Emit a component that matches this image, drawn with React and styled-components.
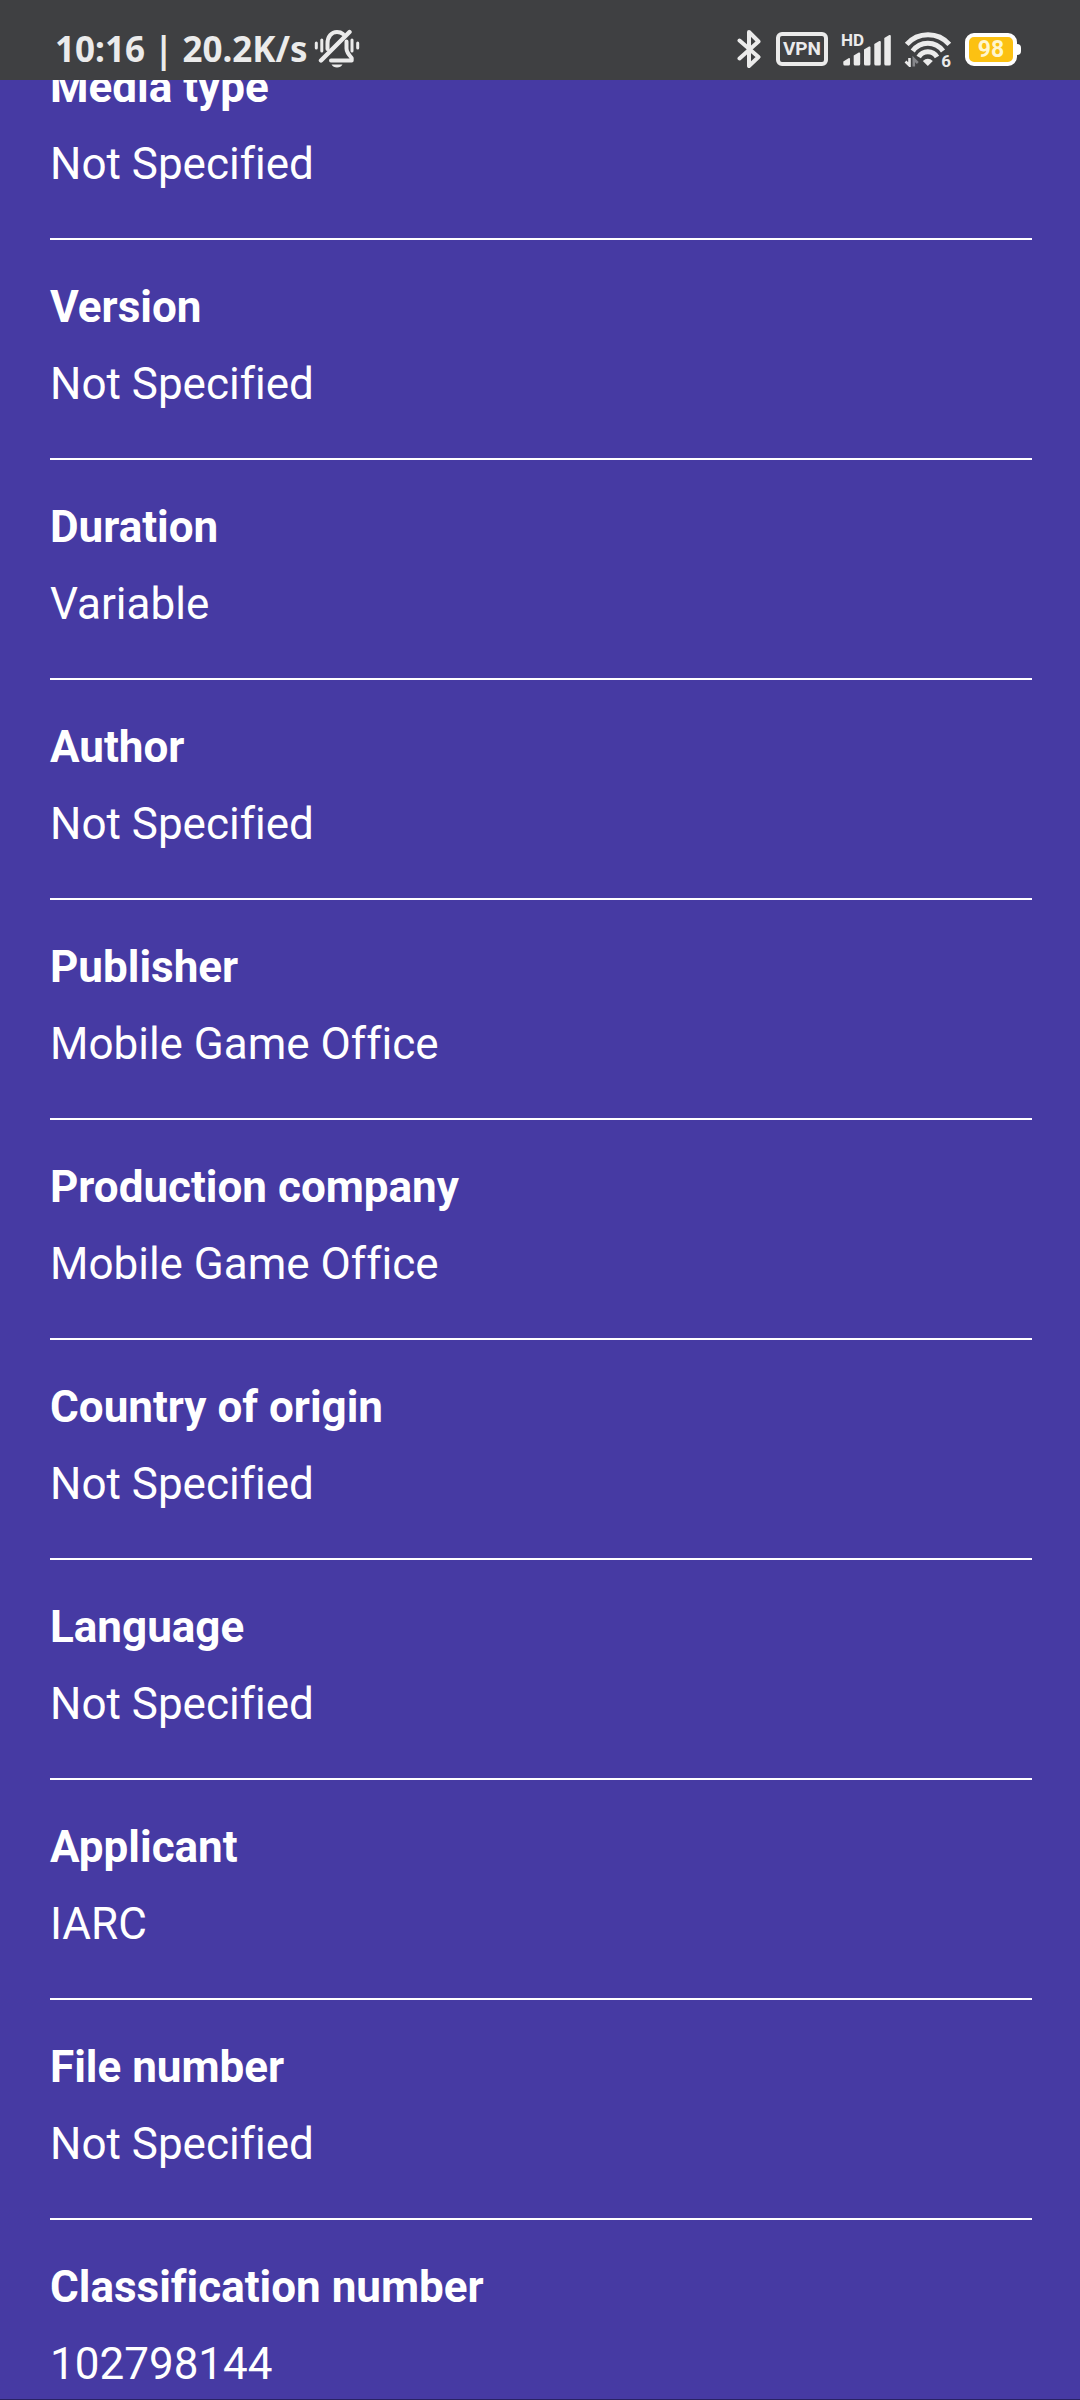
import styled, { createGlobalStyle } from 'styled-components';

const GlobalStyle = createGlobalStyle`
    body {
        margin: 0;
        background-color: #463aa3;
    }
`;

const Screen = styled.div`
    box-sizing: border-box;
    height: 100vh;
    display: flex;
    flex-direction: column;
    color: white;
    background-color: #463aa3;
    border-bottom: 1px solid #2a2362;
    font-family: Roboto, "Liberation Sans", sans-serif;
`;

const StatusBar = styled.header`
    flex: none;
    box-sizing: border-box;
    height: 80px;
    padding: 18px 59px 0 55px;
    display: flex;
    align-items: center;
    justify-content: space-between;
    color: #ebebeb;
    background-color: #3f4042;
    font-weight: 700;
`;

const StatusGroup = styled.div`
    display: flex;
    align-items: center;
    gap: ${props => props.$gap}px;
`;

const Clock = styled.span`
    font-family: "Noto Sans", "Open Sans", sans-serif;
    font-size: 35px;
    line-height: 40px;
    white-space: pre;
`;

const VpnBadge = styled.span`
    box-sizing: border-box;
    width: 52px;
    height: 34px;
    border: 4px solid #ebebeb;
    border-radius: 6px;
    font-size: 19px;
    line-height: 26px;
    text-align: center;
`;

const Signal = styled.div`
    position: relative;
    display: flex;
`;

const SignalLabel = styled.span`
    position: absolute;
    top: -3px;
    left: 0;
    font-size: 17px;
    line-height: 20px;
`;

const Wifi = styled.div`
    position: relative;
    display: flex;
`;

const WifiLabel = styled.span`
    position: absolute;
    right: 1px;
    bottom: -4px;
    font-size: 17px;
    line-height: 20px;
`;

const Battery = styled.div`
    display: flex;
    align-items: center;
`;

const BatteryBody = styled.span`
    box-sizing: border-box;
    width: 52px;
    height: 33px;
    border: 4px solid white;
    border-radius: 9px;
    color: #fff6cf;
    background-color: #fcc112;
    font-size: 23px;
    line-height: 25px;
    text-align: center;
`;

const BatteryTip = styled.span`
    width: 4px;
    height: 11px;
    border-radius: 0 4px 4px 0;
    background-color: white;
`;

const Content = styled.main`
    flex: 1;
    min-height: 0;
    overflow: hidden;
`;

// the list is scrolled a little way under the status bar
const Details = styled.dl`
    margin: -60px 48px 0 50px;
    font-variant-ligatures: none;
`;

const Detail = styled.div`
    padding: 34px 0 41px;
    border-bottom: 2px solid white;
`;

const DetailTitle = styled.dt`
    font-size: 44px;
    line-height: 66px;
    font-weight: 700;
`;

const DetailValue = styled.dd`
    margin: 11px 0 0;
    font-size: 44px;
    line-height: 66px;
`;

const details = [
    { title: 'Media type', value: 'Not Specified' },
    { title: 'Version', value: 'Not Specified' },
    { title: 'Duration', value: 'Variable' },
    { title: 'Author', value: 'Not Specified' },
    { title: 'Publisher', value: 'Mobile Game Office' },
    { title: 'Production company', value: 'Mobile Game Office' },
    { title: 'Country of origin', value: 'Not Specified' },
    { title: 'Language', value: 'Not Specified' },
    { title: 'Applicant', value: 'IARC' },
    { title: 'File number', value: 'Not Specified' },
    { title: 'Classification number', value: '102798144' },
];

function MutedBellIcon() {
    return (
        <svg width="46" height="40" viewBox="0 0 46 40" fill="none" stroke="currentColor" strokeLinecap="round" strokeLinejoin="round">
            <path d="M2.3 14v5M7.8 11v11M38 11v11M43.7 14v5" strokeWidth="3" />
            <path d="M13.5 20v-5.500C13.500 7.500 17.500 3 23 3c2.500 0 4.500.7 6 2" strokeWidth="4" />
            <path d="M32.500 12.500v7c0 3.500 2 6 5.200 9.500v2.500H17" strokeWidth="4" />
            <path d="M7 31.500L35.500 3" strokeWidth="4.400" />
            <path d="M17.500 35.500h11c-1 2-3 3-5.500 3s-4.500-1-5.500-3z" fill="currentColor" stroke="none" />
        </svg>
    );
}

function BluetoothIcon() {
    return (
        <svg width="26" height="42" viewBox="0 0 26 42" fill="none" stroke="currentColor" strokeWidth="4" strokeLinecap="round" strokeLinejoin="round">
            <path d="M2.500 12.500L21.500 29 12 38V4L21.500 13.500 2.500 30.500" />
        </svg>
    );
}

function SignalIcon() {
    return (
        <svg width="50" height="33" viewBox="0 0 50 33" fill="currentColor">
            <path d="M2.300 31v-2.500L7.500 25.200q1.500-.5 1.500 1V31q0 1.500-1.500 1.500H3.800q-1.500 0-1.500-1.500z" />
            <path d="M12.700 31v-8.500l5-3q1.500-.5 1.500 1V31q0 1.500-1.500 1.500h-3.500q-1.500 0-1.500-1.500z" />
            <path d="M23 31V16.500l5-3q1.500-.5 1.500 1V31q0 1.500-1.500 1.500h-3.500Q23 32.500 23 31z" />
            <path d="M33.300 31V11l5-3q1.500-.5 1.500 1v22q0 1.500-1.500 1.500h-3.500q-1.500 0-1.500-1.500z" />
            <path d="M43.300 31V5l5-3q1.500-.5 1.500 1v28q0 1.500-1.500 1.500h-3.500q-1.500 0-1.500-1.500z" />
        </svg>
    );
}

function WifiIcon() {
    return (
        <svg width="48" height="36" viewBox="0 0 48 36" fill="none" stroke="currentColor" strokeWidth="5">
            <path d="M2.700 13.300A28.400 28.400 0 0 1 45.300 13.300" />
            <path d="M8.700 20A18.600 18.600 0 0 1 39 20" />
            <path d="M14.700 26A10.500 10.500 0 0 1 33 26" />
            <path d="M18.800 30q5-4.500 10 0L23.800 35z" fill="currentColor" stroke="none" />
            <path d="M5.500 27v7.500L1.500 30.500" strokeWidth="2.600" />
            <path d="M9.800 35.500V28l4 4" stroke="#85868a" strokeWidth="2.600" />
        </svg>
    );
}

function App() {
    return (
        <>
            <GlobalStyle />
            <Screen>
                <StatusBar>
                    <StatusGroup $gap={6}>
                        <Clock>10:16 | 20.2K/s</Clock>
                        <MutedBellIcon />
                    </StatusGroup>
                    <StatusGroup $gap={13}>
                        <BluetoothIcon />
                        <VpnBadge>VPN</VpnBadge>
                        <Signal>
                            <SignalIcon />
                            <SignalLabel>HD</SignalLabel>
                        </Signal>
                        <Wifi>
                            <WifiIcon />
                            <WifiLabel>6</WifiLabel>
                        </Wifi>
                        <Battery>
                            <BatteryBody>98</BatteryBody>
                            <BatteryTip />
                        </Battery>
                    </StatusGroup>
                </StatusBar>
                <Content>
                    <Details>
                        {details.map(({ title, value }) => (
                            <Detail key={title}>
                                <DetailTitle>{title}</DetailTitle>
                                <DetailValue>{value}</DetailValue>
                            </Detail>
                        ))}
                    </Details>
                </Content>
            </Screen>
        </>
    );
}

export default App;
